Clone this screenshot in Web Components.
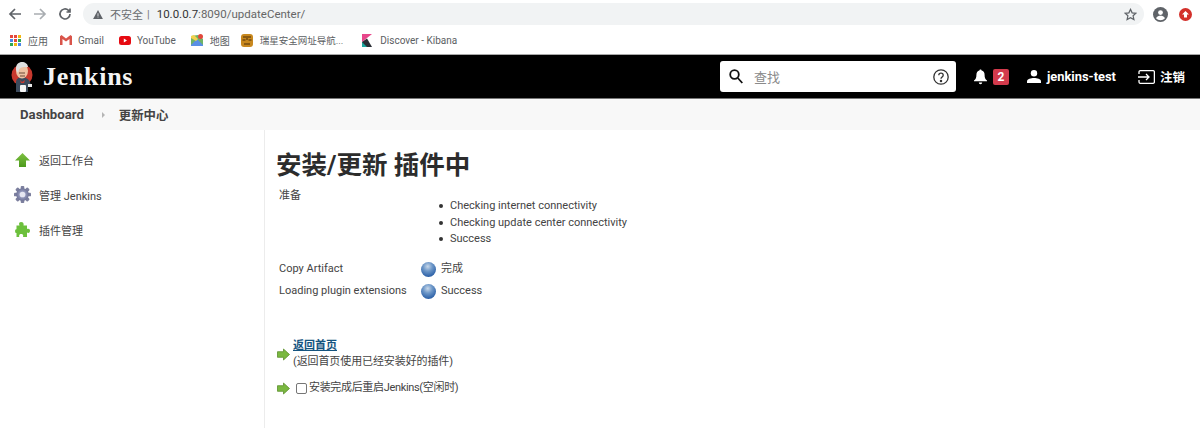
<!DOCTYPE html>
<html lang="zh">
<head>
<meta charset="utf-8">
<title>Jenkins</title>
<style>
  html, body { margin: 0; height: 428px; overflow: hidden; background: #fff; }
  body { font-family: Roboto, "Noto Sans CJK SC", sans-serif; color: #333; }
</style>
</head>
<body>
<browser-toolbar></browser-toolbar>
<bookmark-bar></bookmark-bar>
<jenkins-header></jenkins-header>
<jenkins-breadcrumbs></jenkins-breadcrumbs>
<page-layout>
  <side-panel slot="side"></side-panel>
  <update-center slot="main"></update-center>
</page-layout>

<script>
// small helper: every element here is just a template + open shadow root
function define(name, html) {
  customElements.define(name, class extends HTMLElement {
    constructor() {
      super();
      this.attachShadow({ mode: 'open' }).innerHTML = html;
    }
  });
}

const FONT = 'Roboto, "Noto Sans CJK SC", sans-serif';

define('browser-toolbar', `
  <style>
    :host { display: flex; align-items: center; height: 27px; padding: 1px 0 0 0; box-sizing: border-box; font: 11px ${FONT}; }
    .nav { display: flex; align-items: center; gap: 9px; padding-left: 7px; }
    .nav svg { width: 16px; height: 16px; fill: none; stroke: #5f6368; stroke-width: 1.7; }
    .pill { flex: none; width: 1061px; height: 22px; margin-left: 10px; background: #f1f3f4; border-radius: 11px;
            display: flex; align-items: center; box-sizing: border-box; padding: 0 7px 0 10px; }
    .warn { width: 10px; height: 9px; fill: #5f6368; margin-right: 7px; }
    .insecure { color: #6a6d70; }
    .sep { color: #777; margin: 0 7px 0 4px; }
    .url { font-size: 11.500px; }
    .host { color: #333; }
    .path { color: #666; }
    .star { margin-left: auto; width: 13px; height: 13px; fill: none; stroke: #5f6368; stroke-width: 1.5; }
    .right { display: flex; align-items: center; gap: 11px; margin-left: 9px; }
  </style>
  <div class="nav">
    <svg viewBox="0 0 16 16"><path d="M14 8H3M8 3 3 8l5 5"/></svg>
    <svg viewBox="0 0 16 16" style="stroke:#a9adb1"><path d="M2 8h11M8 3l5 5-5 5"/></svg>
    <svg viewBox="0 0 16 16"><path d="M13 8a5 5 0 1 1-1.500-3.600L13 6M13 2.500V6H9.500"/></svg>
  </div>
  <div class="pill">
    <svg class="warn" viewBox="0 0 12 11"><path d="M6 0 12 11H0Z"/><path d="M5.500 4h1v3.500h-1zM5.500 8.300h1v1h-1z" fill="#f1f3f4"/></svg>
    <span class="insecure">不安全</span><span class="sep">|</span>
    <span class="url"><span class="host">10.0.0.7</span><span class="path">:8090/updateCenter/</span></span>
    <svg class="star" viewBox="0 0 16 16"><path d="M8 1.700 10 6l4.600.5-3.400 3.100 1 4.600L8 11.900l-4.200 2.300 1-4.600L1.400 6.500 6 6Z"/></svg>
  </div>
  <div class="right">
    <svg width="15" height="15" viewBox="0 0 15 15"><circle cx="7.500" cy="7.500" r="7.500" fill="#5f6368"/><circle cx="7.500" cy="5.600" r="2.400" fill="#fff"/><path d="M3 11.200c1-1.900 2.800-2.400 4.500-2.400s3.500.5 4.500 2.400A6 6 0 0 1 7.500 13.300 6 6 0 0 1 3 11.200Z" fill="#fff"/></svg>
    <svg width="13" height="13" viewBox="0 0 13 13"><circle cx="6.500" cy="6.500" r="6.500" fill="#d3302a"/><path d="M6.500 3 10 6.600H8v3H5v-3H3Z" fill="#fff"/></svg>
  </div>
`);

define('bookmark-item', `
  <style>
    :host { display: inline-flex; align-items: center; gap: var(--gap, 6px); color: #5b5e62; font: 10px ${FONT}; white-space: nowrap; }
  </style>
  <slot name="icon"></slot><slot></slot>
`);

define('bookmark-bar', `
  <style>
    :host { display: flex; align-items: center; height: 28px; padding: 0 0 1px 10px; box-sizing: border-box; border-bottom: 1px solid #a8a8a8; }
    bookmark-item { flex: none; }
    svg { display: block; }
  </style>
  <bookmark-item style="--gap:7px;margin-right:12px">
    <svg slot="icon" width="11" height="11" viewBox="0 0 11 11">
      <g fill="#e5483c"><rect width="3" height="3"/><rect x="4" width="3" height="3"/></g><rect x="8" width="3" height="3" fill="#f3b60f"/>
      <rect y="4" width="3" height="3" fill="#4a86e8"/><rect x="4" y="4" width="3" height="3" fill="#e5483c"/><rect x="8" y="4" width="3" height="3" fill="#31a853"/>
      <rect y="8" width="3" height="3" fill="#31a853"/><rect x="4" y="8" width="3" height="3" fill="#f3b60f"/><rect x="8" y="8" width="3" height="3" fill="#4a86e8"/>
    </svg>应用</bookmark-item>
  <bookmark-item style="margin-right:15px">
    <svg slot="icon" width="12" height="10" viewBox="0 0 12 10"><path d="M0 1.200V10h2.500V4L6 6.600 9.500 4v6H12V1.200L10.500 0 6 3.400 1.500 0Z" fill="#d9544a"/></svg>Gmail</bookmark-item>
  <bookmark-item style="margin-right:15px">
    <svg slot="icon" width="12" height="9" viewBox="0 0 12 9"><rect width="12" height="9" rx="2.500" fill="#e60a12"/><path d="M4.800 2.500 8 4.500 4.800 6.500Z" fill="#fff"/></svg>YouTube</bookmark-item>
  <bookmark-item style="--gap:7px;margin-right:11px">
    <svg slot="icon" width="12" height="12" viewBox="0 0 12 12"><path d="M0 2 7 1 12 5V11L5 12 0 11Z" fill="#6fb366"/><path d="M0 11 6 5 12 11V12H0Z" fill="#5a8fe6"/><path d="M0 2 3 1 7 5 5 7 0 4Z" fill="#f3d24e"/><circle cx="9.500" cy="2.500" r="2.500" fill="#e2483c"/></svg>地图</bookmark-item>
  <bookmark-item style="--gap:7px;margin-right:19px;font-size:9.500px">
    <svg slot="icon" width="12" height="13" viewBox="0 0 12 13"><rect width="12" height="13" rx="3" fill="#c8881e"/><path d="M2 3h3M7 3h3M1.500 6h3M7.500 6h3M3 10h6M6 2v4" stroke="#4a2c08" stroke-width="1"/></svg>瑞星安全网址导航...</bookmark-item>
  <bookmark-item style="--gap:8px">
    <svg slot="icon" width="10" height="13" viewBox="0 0 10 13"><path d="M0 0H10L0 8Z" fill="#e8478b"/><path d="M0 8 5 4.500 10 13H0Z" fill="#2b2f36"/><path d="M0 13V8L5 13Z" fill="#1ca8a0"/></svg>Discover - Kibana</bookmark-item>
`);

define('jenkins-logo', `
  <style>
    :host { display: flex; align-items: center; gap: 10px; }
    svg { display: block; }
    .name { font: bold 26px "Liberation Serif", serif; color: #f4f4f4; letter-spacing: .7px; }
  </style>
  <svg width="22" height="32" viewBox="0 0 22 32">
    <circle cx="11" cy="14" r="10.500" fill="#c8392e"/>
    <path d="M5 31V21c0-3 3-5 6-5s7 2 8 5l1 4-3 1v5Z" fill="#3c4a5c"/>
    <ellipse cx="11" cy="10" rx="6" ry="7.500" fill="#eec2a2"/>
    <path d="M5 9c-.5-6 3-8 6-8s6 2 6 5c-3 0-8-.5-9 3l-1 3Z" fill="#dfe0e0"/>
    <path d="M8 12h6M9 15h5" stroke="#6b4a38" stroke-width="1"/>
    <path d="M9 19l2 2 3-2-1 3h-3Z" fill="#c8392e"/>
    <rect x="9" y="24" width="6" height="7" rx="1" fill="#f4f4f4"/>
    <rect x="17" y="23" width="4" height="3" fill="#e8e8e8"/>
  </svg>
  <span class="name">Jenkins</span>
`);

define('search-box', `
  <style>
    :host { display: flex; align-items: center; width: 236px; height: 31px; background: #fff; border-radius: 3px; box-sizing: border-box; padding: 0 7px 0 9px; font: 13px ${FONT}; }
    .q { margin-left: 11px; color: #8a8a8a; flex: 1; }
    svg { display: block; flex: none; }
  </style>
  <svg width="14" height="15" viewBox="0 0 14 15" fill="none" stroke="#111" stroke-width="1.800"><circle cx="5.500" cy="5.500" r="4.300"/><path d="m8.800 9 4.500 5"/></svg>
  <span class="q">查找</span>
  <svg width="16" height="16" viewBox="0 0 16 16" fill="none" stroke="#333" stroke-width="1.300"><circle cx="8" cy="8" r="7.200"/><path d="M5.800 6.300C5.800 5 6.800 4.200 8 4.200s2.200.8 2.200 2c0 1.700-2.200 1.700-2.200 3.500"/><circle cx="8" cy="12" r=".6" fill="#333"/></svg>
`);

define('jenkins-header', `
  <style>
    :host { display: flex; align-items: center; height: 44px; background: #000; color: #fff; padding: 0 15px 0 11px; box-sizing: border-box; border-bottom: 1px solid #777; font: bold 12.500px ${FONT}; }
    jenkins-logo { margin-right: auto; }
    svg { display: block; flex: none; }
    .badge { background: #d33a4c; border-radius: 2px; width: 16px; height: 16px; margin: 0 18px 0 6px; font-size: 12px; line-height: 16px; text-align: center; }
    .user { margin: 0 22px 0 6px; font-size: 12.900px; }
    .out { margin-left: 5px; }
  </style>
  <jenkins-logo></jenkins-logo>
  <search-box style="margin-right:18px"></search-box>
  <svg width="13" height="16" viewBox="0 0 13 16" fill="#fff"><path d="M6.500 0.500c.7 0 1.100.5 1.100 1.100 2 .5 3 2.200 3 4.300 0 2.800.6 4.300 2.400 5.600v.8H0v-.8c1.800-1.300 2.400-2.800 2.400-5.600 0-2.100 1-3.800 3-4.300 0-.6.400-1.100 1.100-1.100Z"/><path d="M4.800 13.500h3.400a1.700 1.700 0 0 1-3.400 0Z"/></svg>
  <span class="badge">2</span>
  <svg width="14" height="13" viewBox="0 0 14 13" fill="#fff"><circle cx="7" cy="3.300" r="3.200"/><path d="M0 13v-1.600C0 8.900 4 8 7 8s7 .9 7 3.400V13Z"/></svg>
  <span class="user">jenkins-test</span>
  <svg width="17" height="14" viewBox="0 0 17 14" fill="none" stroke="#fff" stroke-width="1.300"><path d="M1 4V2a1.300 1.300 0 0 1 1.300-1.300h13A1.300 1.300 0 0 1 16.400 2v10a1.300 1.300 0 0 1-1.300 1.300h-13A1.300 1.300 0 0 1 1 12v-2"/><path d="M0 7h10.500M8 4l3 3-3 3"/></svg>
  <span class="out">注销</span>
`);

define('jenkins-breadcrumbs', `
  <style>
    :host { display: flex; align-items: center; height: 31px; padding-left: 20px; background: #f8f8f8; box-sizing: border-box; color: #444; font: 700 12.400px ${FONT}; }
    .root { font-size: 13.200px; }
    .caret { width: 0; height: 0; border-left: 3px solid #b5b5b5; border-top: 3px solid transparent; border-bottom: 3px solid transparent; margin: 0 14px 0 18px; }
  </style>
  <span class="root">Dashboard</span><i class="caret"></i><span>更新中心</span>
`);

define('page-layout', `
  <style>
    :host { display: grid; grid-template-columns: 265px 1fr; height: 298px; }
    .side { border-right: 1px solid #ececec; }
  </style>
  <div class="side"><slot name="side"></slot></div>
  <div><slot name="main"></slot></div>
`);

define('side-item', `
  <style>
    :host { display: flex; align-items: center; height: 35px; gap: 8px; font: 11px ${FONT}; color: #444; }
    .i { width: 17px; display: flex; justify-content: center; }
  </style>
  <span class="i"><slot name="icon"></slot></span><slot></slot>
`);

define('side-panel', `
  <style>
    :host { display: block; padding: 12px 0 0 14px; }
    svg { display: block; }
  </style>
  <side-item>
    <svg slot="icon" width="15" height="14" viewBox="0 0 15 14"><defs><linearGradient id="g1" x1="0" y1="0" x2="0" y2="1"><stop offset="0" stop-color="#7fc142"/><stop offset="1" stop-color="#4c9a1c"/></linearGradient></defs><path d="M7.500 0 15 7.500H11V14H4V7.500H0Z" fill="url(#g1)"/></svg>返回工作台</side-item>
  <side-item>
    <svg slot="icon" width="19" height="19" viewBox="0 0 19 19"><defs><radialGradient id="g2"><stop offset="0" stop-color="#b9bde0"/><stop offset="1" stop-color="#6e7396"/></radialGradient></defs>
      <g fill="#7c7f9e"><rect x="7.500" y="0" width="4" height="19" rx="1"/><rect x="0" y="7.500" width="19" height="4" rx="1"/><rect x="7.500" y="0" width="4" height="19" rx="1" transform="rotate(45 9.500 9.500)"/><rect x="7.500" y="0" width="4" height="19" rx="1" transform="rotate(-45 9.500 9.500)"/></g>
      <circle cx="9.500" cy="9.500" r="7" fill="url(#g2)"/><circle cx="9.500" cy="9.500" r="3.200" fill="#e6e7f2"/></svg>管理 Jenkins</side-item>
  <side-item>
    <svg slot="icon" width="15" height="16" viewBox="0 0 15 16"><path d="M6 0c2 0 3 1.200 2.500 3.500H12V7c2-.8 3 .3 3 1.800S14 11.500 12 10.600V15H8c.6-2-.3-3-1.800-3S3.700 13 4.300 15H1.500v-4C-.3 11.500-.5 6.500 1.500 7.200V3.500h3C3.500 1.500 4.300 0 6 0Z" fill="#6cc03c"/></svg>插件管理</side-item>
`);

define('status-ball', `
  <style>
    :host { display: block; width: 15px; height: 15px; border-radius: 50%;
            background: radial-gradient(circle at 45% 30%, #c8d8ea 0, #6d97c8 35%, #2e62a8 75%, #7a9cc4 100%); }
  </style>
`);

define('link-row', `
  <style>
    :host { display: flex; align-items: center; gap: 3px; }
    svg { flex: none; display: block; }
  </style>
  <svg width="13" height="13" viewBox="0 0 13 13"><path d="M6.500 1 12.500 6.500 6.500 12V9.300H.5V3.700H6.500Z" fill="#7ab840" stroke="#5c8f2c" stroke-width=".8"/></svg>
  <div><slot></slot></div>
`);

define('update-center', `
  <style>
    :host { display: block; padding: 19px 0 0 12px; font: 11px/16px ${FONT}; color: #444; }
    h1 { margin: 0 0 7px -1px; font: 700 25.500px/32px ${FONT}; color: #2c2c2c; }
    .job { display: grid; grid-template-columns: 142px 1fr; padding-left: 2px; }
    ul { margin: 10px 0 0; padding: 0; list-style: none; }
    li { display: flex; align-items: center; height: 16.400px; }
    li::before { content: ""; width: 4px; height: 4px; border-radius: 50%; background: #333; margin-right: 7px; margin-left: 18px; }
    .rows { display: grid; grid-template-columns: 142px 1fr; row-gap: 6px; padding: 14px 0 0 2px; white-space: nowrap; }
    .st { display: flex; align-items: center; gap: 5px; }
    .links { margin-top: 39px; display: grid; row-gap: 10px; }
    a { display: block; color: #15547f; font-weight: 700; text-decoration: underline; }
    .note { letter-spacing: -.1px; }
    .check { display: flex; align-items: center; gap: 1px; margin-left: 3px; letter-spacing: -.33px; }
    .box { width: 9px; height: 9px; border: 1px solid #767676; border-radius: 2px; background: #fff; margin-right: 1px; }
  </style>
  <h1>安装/更新 插件中</h1>
  <div class="job">
    <div>准备</div>
    <ul>
      <li>Checking internet connectivity</li>
      <li>Checking update center connectivity</li>
      <li>Success</li>
    </ul>
  </div>
  <div class="rows">
    <div>Copy Artifact</div><div class="st"><status-ball></status-ball>完成</div>
    <div>Loading plugin extensions</div><div class="st"><status-ball></status-ball>Success</div>
  </div>
  <div class="links">
    <link-row><a href="#">返回首页</a><span class="note">(返回首页使用已经安装好的插件)</span></link-row>
    <link-row><div class="check"><span class="box"></span>安装完成后重启Jenkins(空闲时)</div></link-row>
  </div>
`);
</script>
</body>
</html>
